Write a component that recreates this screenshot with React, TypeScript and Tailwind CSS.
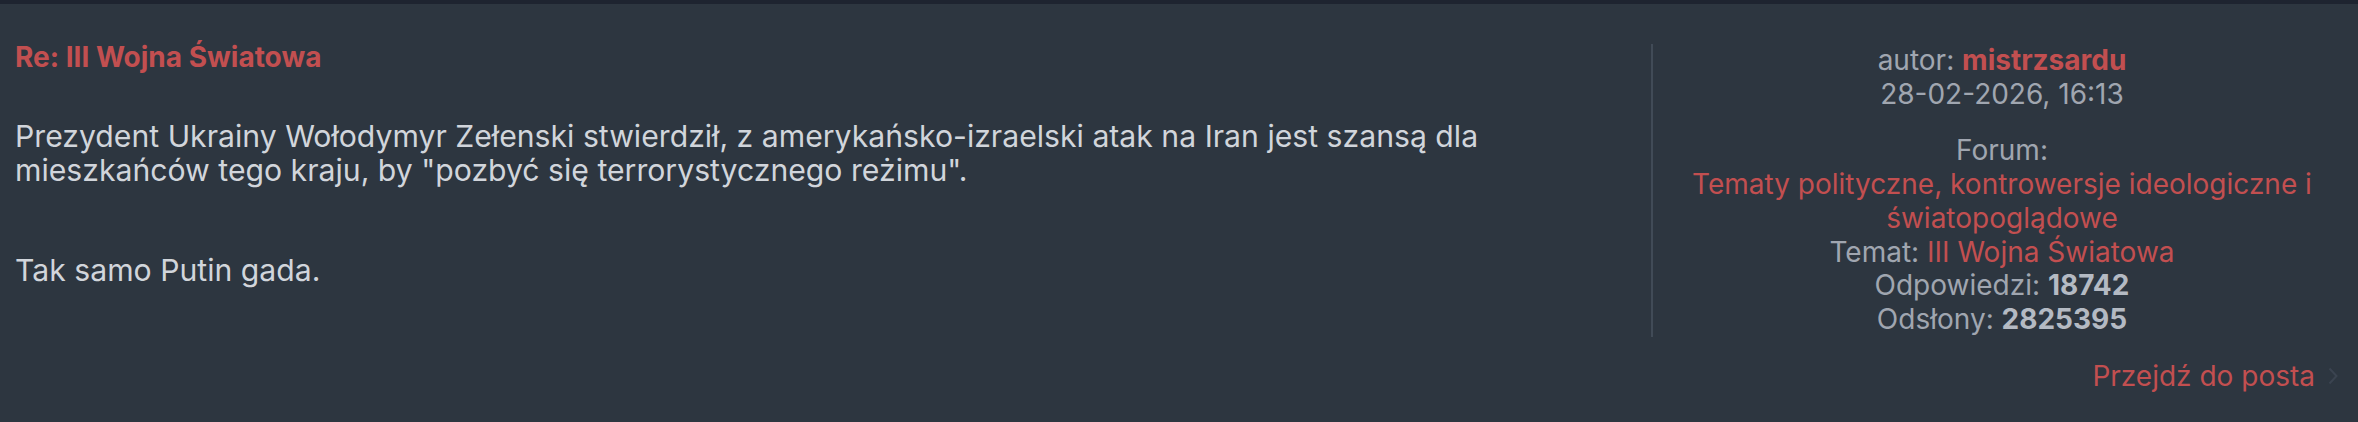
import React from "react";

export default function App() {
  return (
    <div
      className="w-[2358px] h-[422px] bg-[#2d3640] overflow-hidden"
      style={{ fontFamily: "Inter, 'Noto Sans', sans-serif" }}
    >
      <div className="h-[4px] bg-[#1e2430]" />
      <div className="flex pt-[37px]">
        <div className="flex-1 pl-[15px] pr-[40px]">
          <div className="text-[#c24f50] font-bold text-[28px] leading-[33px]">Re: III Wojna Światowa</div>
          <div className="mt-[45px] text-[#d1d5db] text-[30.2px] leading-[34px]">
            <p>
              Prezydent Ukrainy Wołodymyr Zełenski stwierdził, z amerykańsko-izraelski atak na Iran jest szansą dla
              <br />
              mieszkańców tego kraju, by "pozbyć się terrorystycznego reżimu".
            </p>
            <p className="mt-[32px]">
              <br />
              Tak samo Putin gada.
            </p>
          </div>
        </div>
        <div className="w-[707px] flex flex-col pt-[3px] text-[28px] leading-[33.7px]">
          <div className="border-l-2 border-[#414b57] pl-[13px] pr-[20px] text-center text-[#a0a6b0]">
            <div>
              autor: <span className="text-[#c24f50] font-bold">mistrzsardu</span>
            </div>
            <div>28-02-2026, 16:13</div>
            <div className="mt-[23px]">Forum:</div>
            <div className="text-[#c24f50]">
              Tematy polityczne, kontrowersje ideologiczne i
              <br />
              światopoglądowe
            </div>
            <div>
              Temat: <span className="text-[#c24f50]">III Wojna Światowa</span>
            </div>
            <div>
              Odpowiedzi: <span className="font-bold text-[#b4bac3]">18742</span>
            </div>
            <div>
              Odsłony: <span className="font-bold text-[#b4bac3]">2825395</span>
            </div>
          </div>
          <div className="mt-[23px] pr-[20px] flex justify-end items-center gap-[13px]">
            <span className="text-[#c24f50]">Przejdź do posta</span>
            <svg width="10" height="18" viewBox="0 0 10 18" fill="none">
              <path d="M1.5 1.5 L8.5 9 L1.5 16.5" stroke="#3b4450" strokeWidth="2" />
            </svg>
          </div>
        </div>
      </div>
    </div>
  );
}
